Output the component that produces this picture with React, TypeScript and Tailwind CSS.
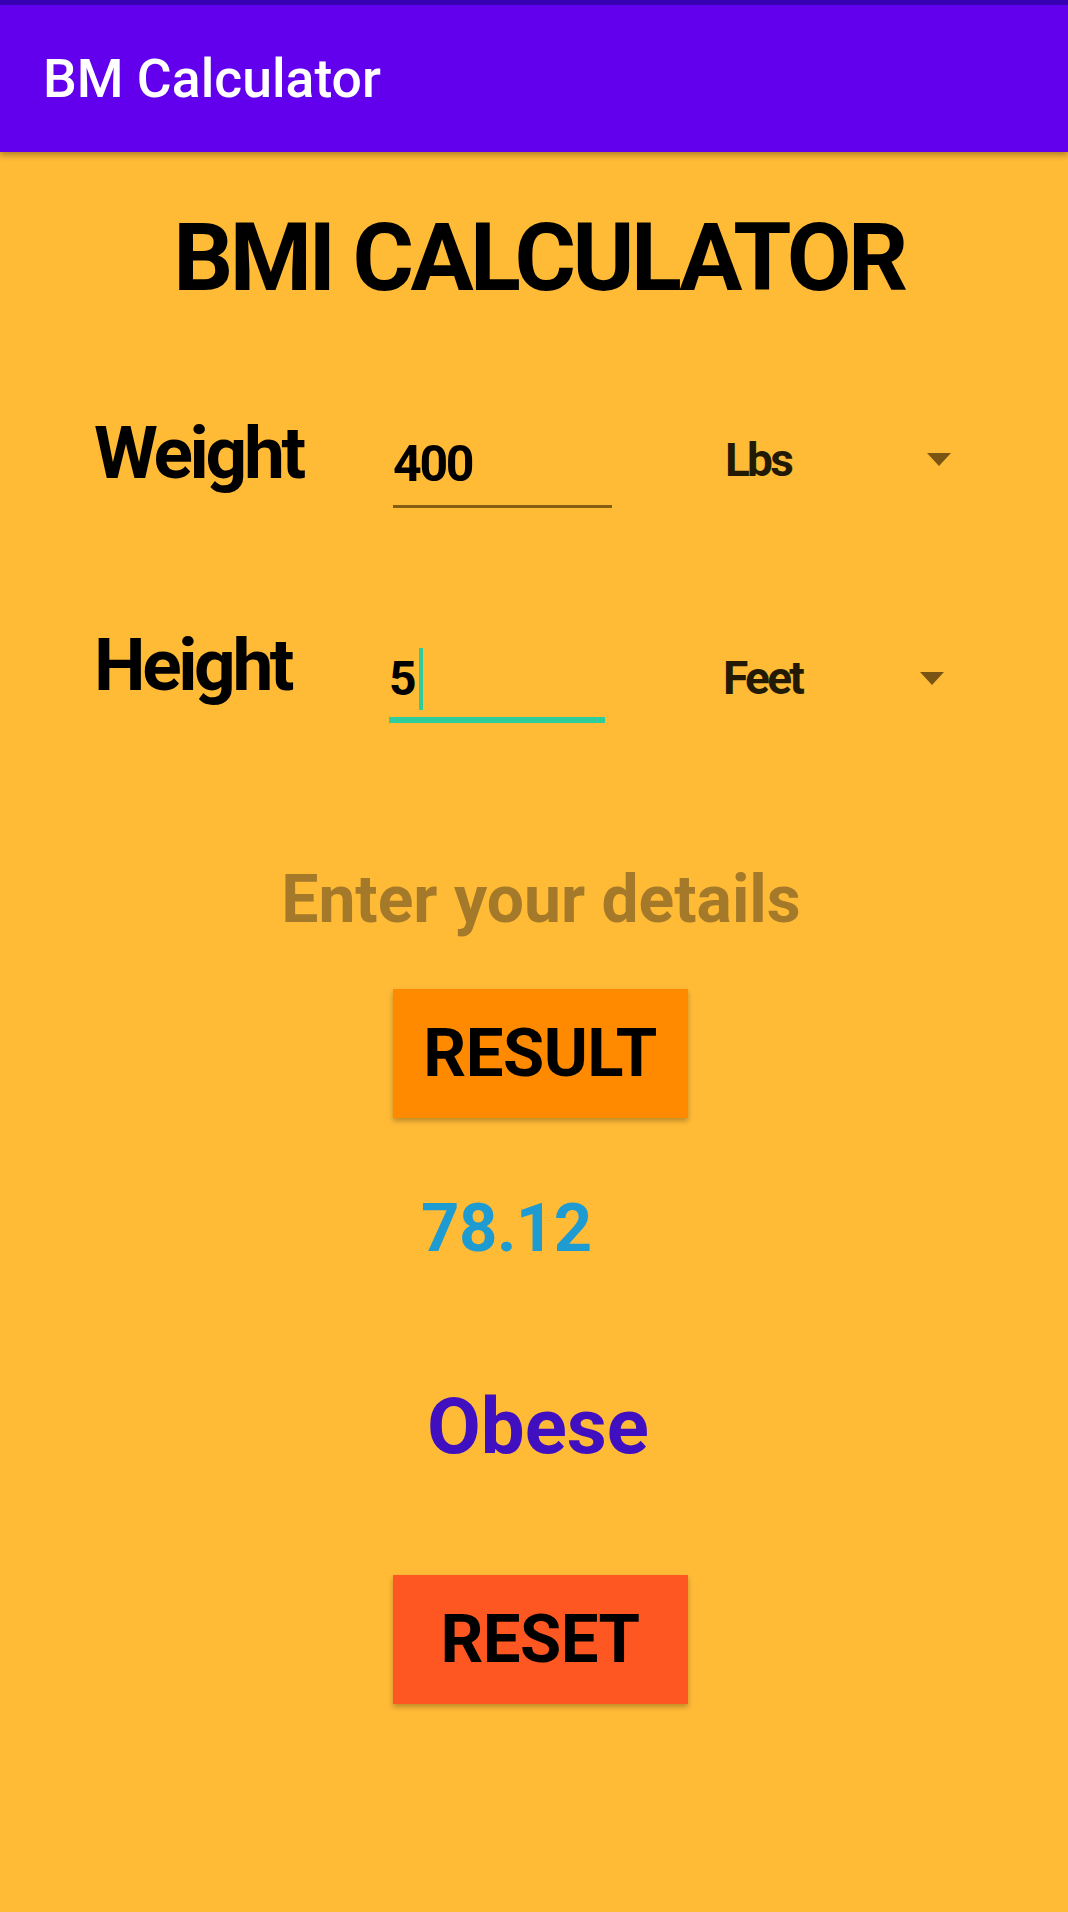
import React from "react";

function Arrow() {
  return (
    <svg width="24" height="13" viewBox="0 0 24 13" className="block">
      <polygon points="0,0 24,0 12,13" fill="#7a5412" />
    </svg>
  );
}

export default function App() {
  return (
    <div className="w-full h-[1912px] bg-[#ffba36] flex flex-col font-[Roboto,sans-serif] overflow-hidden">
      <div className="relative z-10 shadow-[0_3px_6px_rgba(0,0,0,0.3)]">
        <div className="h-[5px] bg-[#3700b3]" />
        <div className="h-[147px] bg-[#6200ee] flex items-center pl-[43px]">
          <span className="text-white text-[53.5px] leading-none font-medium">BM Calculator</span>
        </div>
      </div>

      <h1 className="mt-[59px] text-center text-black text-[94px] leading-none font-bold tracking-[-3.5px] pl-[10px]">
        BMI CALCULATOR
      </h1>

      {/* Weight row */}
      <div className="mt-[112px] flex items-start">
        <div className="w-[393px] pl-[94px] text-[73px] leading-none font-bold text-black tracking-[-3.3px]">Weight</div>
        <div className="w-[219px] flex flex-col">
          <div className="mt-[22px] text-[50px] leading-none font-bold text-black tracking-[-2.3px]">400</div>
          <div className="mt-[16px] h-[3px] bg-[#845c12]" />
        </div>
        <div className="ml-[113px] mt-[20px] w-[202px] text-[46px] leading-none font-bold text-[#231a06] tracking-[-2.8px]">Lbs</div>
        <div className="mt-[36px]">
          <Arrow />
        </div>
      </div>

      {/* Height row */}
      <div className="mt-[121px] flex items-start">
        <div className="w-[389px] pl-[94px] text-[73px] leading-none font-bold text-black tracking-[-3.4px]">Height</div>
        <div className="w-[216px] flex flex-col">
          <div className="mt-[26px] h-[48px] flex items-center">
            <span className="text-[48px] leading-none font-bold text-black">5</span>
            <span className="ml-[2px] w-[4px] h-[62px] bg-[#2ecc9a]" />
          </div>
          <div className="mt-[14px] h-[6px] bg-[#2ecc9a]" />
        </div>
        <div className="ml-[118px] mt-[26px] w-[197px] text-[46px] leading-none font-bold text-[#231a06] tracking-[-2.7px]">Feet</div>
        <div className="mt-[43px]">
          <Arrow />
        </div>
      </div>

      <div className="mt-[144px] text-center text-[66px] leading-none font-bold text-[#a47a2a] pl-[14px]">
        Enter your details
      </div>

      <div className="mt-[56px] flex justify-center pl-[12px]">
        <button className="w-[295px] h-[129px] bg-[#ff8a00] shadow-[0_3px_5px_rgba(0,0,0,0.25)] flex items-center justify-center text-[67px] leading-none font-bold text-black tracking-[-0.5px]">
          RESULT
        </button>
      </div>

      <div className="mt-[77px] pl-[421px] text-[67px] leading-none font-bold text-[#1e9bd0] tracking-[-0.5px]">78.12</div>

      <div className="mt-[126px] text-center text-[78px] leading-none font-bold text-[#4010c0] pl-[8px]">Obese</div>

      <div className="mt-[109px] flex justify-center pl-[12px]">
        <button className="w-[295px] h-[129px] bg-[#ff5722] shadow-[0_3px_5px_rgba(0,0,0,0.25)] flex items-center justify-center text-[67px] leading-none font-bold text-black tracking-[-0.5px]">
          RESET
        </button>
      </div>
    </div>
  );
}
